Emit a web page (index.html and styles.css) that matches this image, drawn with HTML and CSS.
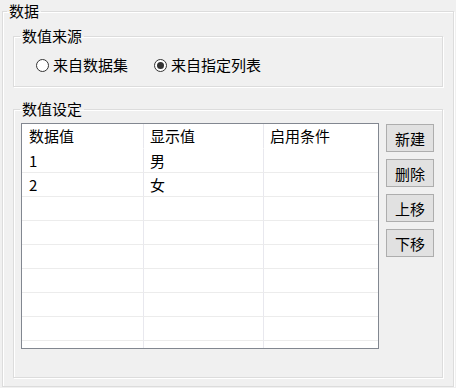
FILE: index.html
```html
<!DOCTYPE html>
<html lang="zh-CN">
<head>
    <meta charset="UTF-8">
    <title>数据</title>
    <link rel="stylesheet" href="styles.css">
</head>
<body>
    <fieldset class="group outer">
        <legend>数据</legend>

        <fieldset class="group source">
            <legend>数值来源</legend>
            <div class="radios">
                <label class="radio"><span class="mark"></span>来自数据集</label>
                <label class="radio checked"><span class="mark"></span>来自指定列表</label>
            </div>
        </fieldset>

        <fieldset class="group values">
            <legend>数值设定</legend>
            <div class="values-body">
                <div class="grid">
                    <table>
                        <tr class="head"><td>数据值</td><td>显示值</td><td>启用条件</td></tr>
                        <tr><td>1</td><td>男</td><td></td></tr>
                        <tr><td>2</td><td>女</td><td></td></tr>
                        <tr><td></td><td></td><td></td></tr>
                        <tr><td></td><td></td><td></td></tr>
                        <tr><td></td><td></td><td></td></tr>
                        <tr><td></td><td></td><td></td></tr>
                        <tr><td></td><td></td><td></td></tr>
                        <tr><td></td><td></td><td></td></tr>
                        <tr><td></td><td></td><td></td></tr>
                    </table>
                </div>
                <div class="buttons">
                    <button class="btn">新建</button>
                    <button class="btn">删除</button>
                    <button class="btn">上移</button>
                    <button class="btn">下移</button>
                </div>
            </div>
        </fieldset>
    </fieldset>
</body>
</html>
```

FILE: styles.css
```css
body {
    margin: 0;
    background-color: #f0f0f0;
    font-family: "Noto Sans CJK SC", "Liberation Sans", sans-serif;
    font-size: 15px;
    color: #000;
}

.group {
    margin: 0;
    padding: 0;
    border: 1px solid #dcdcdc;
    box-shadow: inset 1px 1px 0 #fff, 1px 1px 0 #fff;
    min-inline-size: 0;
}

.group legend {
    padding: 0 2px;
    line-height: 16px;
}

/* padding-top counts from the legend's bottom edge */
.outer {
    margin: 3px 2px 0 2px;
    padding: 9px 0 8px 0;
}

.outer > legend {
    margin-left: 4px;
}

.outer > .group {
    margin-left: 10px;
    margin-right: 10px;
}

.source > legend,
.values > legend {
    margin-left: 6px;
}

.source {
    padding: 11px 0 11px 0;
}

.radios {
    display: flex;
    gap: 26px;
    height: 20px;
    padding-left: 22px;
    align-items: center;
}

.radio {
    display: flex;
    align-items: center;
    gap: 4px;
    line-height: 20px;
}

.mark {
    width: 11px;
    height: 11px;
    border: 1px solid #333;
    border-radius: 50%;
    background-color: #fff;
    display: flex;
    align-items: center;
    justify-content: center;
}

.checked .mark::after {
    content: "";
    width: 7px;
    height: 7px;
    border-radius: 50%;
    background-color: #333;
}

.outer > .values {
    margin-top: 14px;
    padding: 6px 0 28px 0;
}

.values-body {
    display: flex;
    gap: 7px;
    padding: 0 8px 0 7px;
}

.grid {
    width: 356px;
    height: 224px;
    border: 1px solid #828790;
    background-color: #fff;
    overflow: hidden;
}

.grid table {
    border-collapse: separate;
    border-spacing: 0;
    table-layout: fixed;
    width: 356px;
}

.grid td {
    height: 23px;
    padding: 0 0 0 6px;
    border-right: 1px solid #e8e8ee;
    border-bottom: 1px solid #ececec;
    line-height: 23px;
    white-space: nowrap;
}

.grid td:nth-child(1) {
    width: 114px;
    padding-left: 7px;
}

.grid td:nth-child(2) {
    width: 113px;
}

.grid td:nth-child(3) {
    border-right: none;
}

.grid .head td {
    height: 24px;
    border-bottom-color: #fff;
    line-height: 24px;
}

.buttons {
    display: flex;
    flex-direction: column;
    gap: 7px;
    padding-top: 1px;
}

.btn {
    width: 48px;
    height: 28px;
    padding: 0;
    background-color: #e1e1e1;
    border: 1px solid #adadad;
    font-family: inherit;
    font-size: 15px;
    color: #000;
}
```
